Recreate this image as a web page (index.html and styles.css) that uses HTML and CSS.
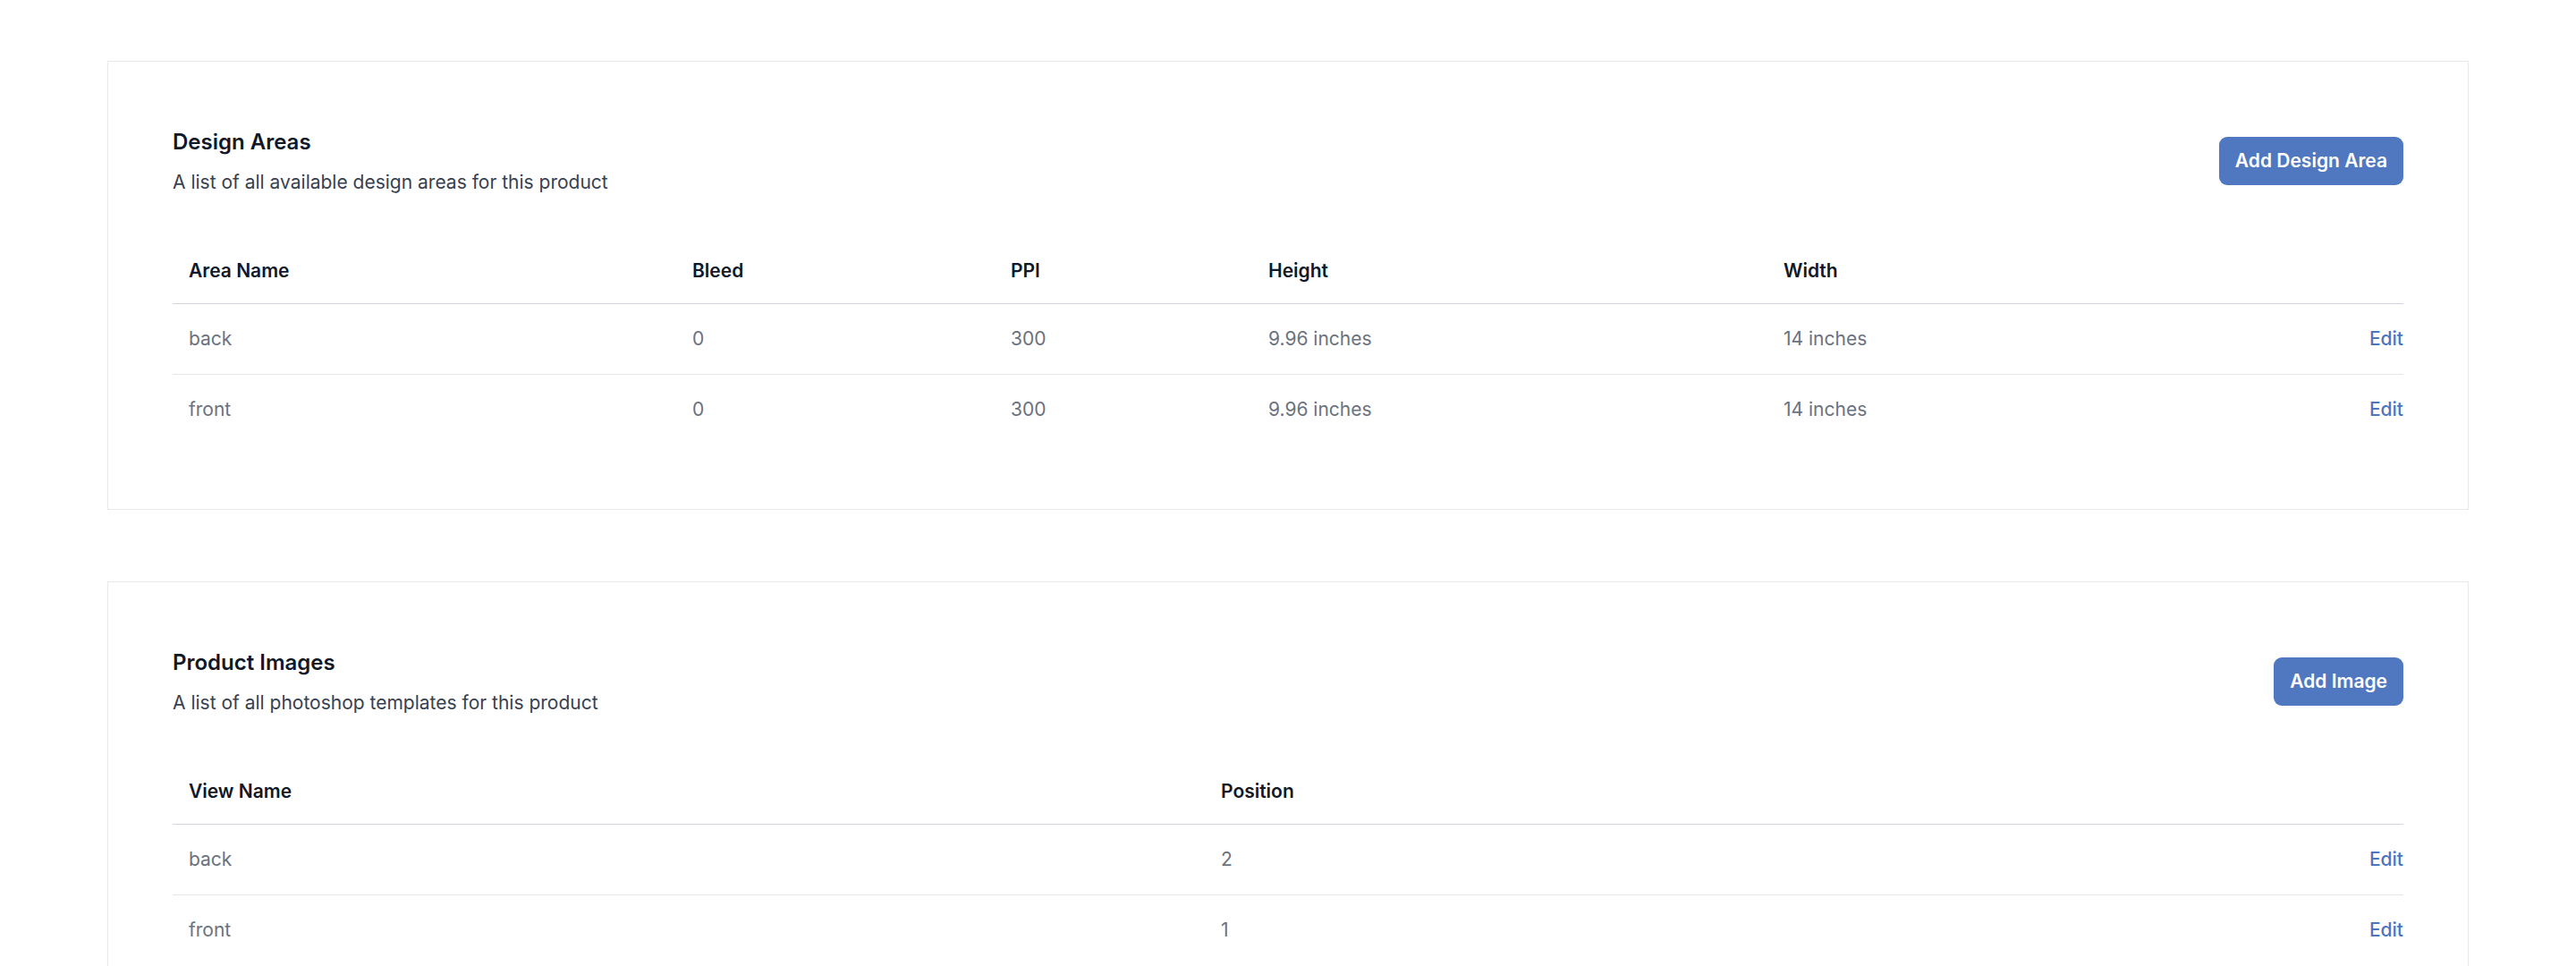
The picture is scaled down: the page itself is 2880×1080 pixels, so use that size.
FILE: index.html
```html
<!DOCTYPE html>
<html lang="en">
<head>
<meta charset="utf-8">
<title>Product settings</title>
<link rel="stylesheet" href="styles.css">
</head>
<body>
<main class="page">
  <section class="card">
    <div class="card-head">
      <div class="head-text">
        <h1 class="title">Design Areas</h1>
        <p class="subtitle">A list of all available design areas for this product</p>
      </div>
      <button class="btn" type="button">Add Design Area</button>
    </div>
    <table class="table">
      <colgroup>
        <col class="c-area">
        <col class="c-bleed">
        <col class="c-ppi">
        <col class="c-height">
        <col>
        <col class="c-edit">
      </colgroup>
      <thead>
        <tr>
          <th>Area Name</th>
          <th>Bleed</th>
          <th>PPI</th>
          <th>Height</th>
          <th>Width</th>
          <th class="actions"></th>
        </tr>
      </thead>
      <tbody>
        <tr>
          <td>back</td>
          <td>0</td>
          <td>300</td>
          <td>9.96 inches</td>
          <td>14 inches</td>
          <td class="actions"><a class="edit" href="#">Edit</a></td>
        </tr>
        <tr>
          <td>front</td>
          <td>0</td>
          <td>300</td>
          <td>9.96 inches</td>
          <td>14 inches</td>
          <td class="actions"><a class="edit" href="#">Edit</a></td>
        </tr>
      </tbody>
    </table>
  </section>

  <section class="card">
    <div class="card-head">
      <div class="head-text">
        <h1 class="title">Product Images</h1>
        <p class="subtitle">A list of all photoshop templates for this product</p>
      </div>
      <button class="btn" type="button">Add Image</button>
    </div>
    <table class="table">
      <colgroup>
        <col class="c-view">
        <col>
        <col class="c-edit">
      </colgroup>
      <thead>
        <tr>
          <th>View Name</th>
          <th>Position</th>
          <th class="actions"></th>
        </tr>
      </thead>
      <tbody>
        <tr>
          <td>back</td>
          <td>2</td>
          <td class="actions"><a class="edit" href="#">Edit</a></td>
        </tr>
        <tr>
          <td>front</td>
          <td>1</td>
          <td class="actions"><a class="edit" href="#">Edit</a></td>
        </tr>
      </tbody>
    </table>
  </section>
</main>
</body>
</html>
```

FILE: styles.css
```css
* {
  box-sizing: border-box;
}

html, body {
  margin: 0;
  padding: 0;
  background: #ffffff;
}

body {
  font-family: Inter, "Noto Sans", "Liberation Sans", sans-serif;
  color: #111827;
  overflow: hidden;
}

.page {
  padding: 68px 120px 0;
  display: flex;
  flex-direction: column;
  gap: 80px;
}

.card {
  border: 1px solid #e8e8ea;
  padding: 72px;
  background: #ffffff;
}

.card-head {
  display: flex;
  align-items: center;
  justify-content: space-between;
}

.title {
  margin: 0;
  font-size: 24px;
  line-height: 36px;
  font-weight: 600;
  color: #111827;
}

.subtitle {
  margin: 12px 0 0;
  font-size: 21px;
  line-height: 30px;
  font-weight: 400;
  color: #374151;
}

.btn {
  border: 0;
  border-radius: 9px;
  background: #5078c1;
  color: #ffffff;
  font-family: inherit;
  font-size: 21px;
  line-height: 30px;
  font-weight: 600;
  padding: 12px 18px;
  cursor: pointer;
}

.table {
  margin-top: 48px;
  width: 100%;
  table-layout: fixed;
  border-collapse: separate;
  border-spacing: 0;
}

.c-area { width: 563px; }
.c-bleed { width: 356px; }
.c-ppi { width: 288px; }
.c-height { width: 576px; }
.c-edit { width: 150px; }
.c-view { width: 1154px; }

.table th {
  padding: 21px 18px;
  text-align: left;
  font-size: 21px;
  line-height: 30px;
  font-weight: 600;
  color: #111827;
  border-bottom: 1px solid #d1d5db;
}

.table td {
  padding: 24px 18px;
  font-size: 21px;
  line-height: 30px;
  font-weight: 400;
  color: #6b7280;
  white-space: nowrap;
}

.table tbody tr + tr td {
  border-top: 1px solid #e5e7eb;
}

.table .actions {
  text-align: right;
  padding-right: 0;
}

.edit {
  color: #4c75c1;
  font-weight: 500;
  text-decoration: none;
}
```
